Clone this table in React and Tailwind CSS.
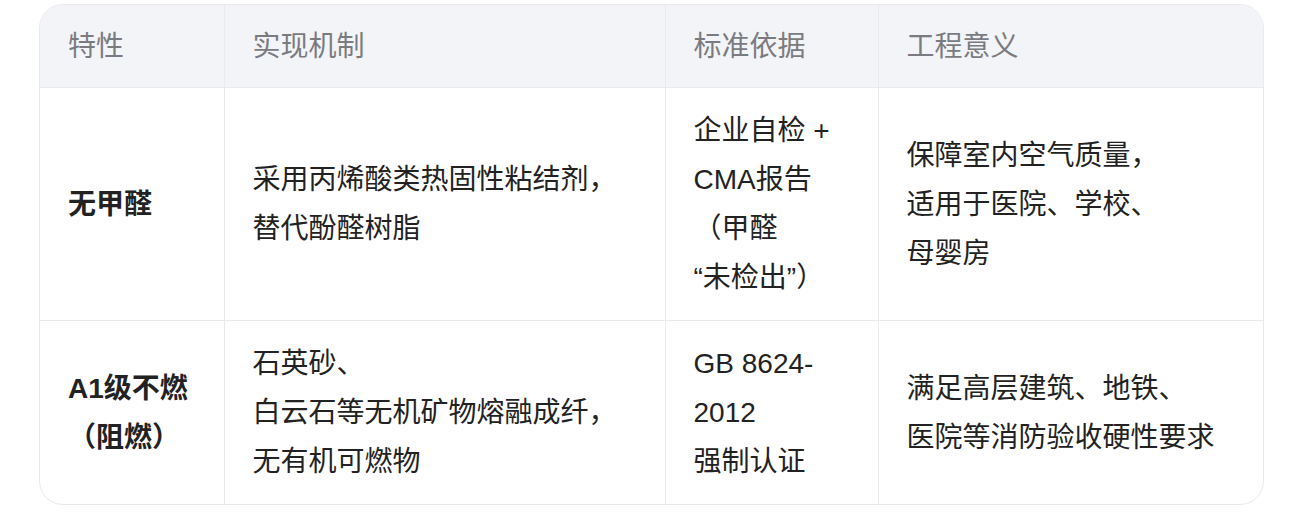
const rows = [
  {
    feature: ["无甲醛"],
    mechanism: ["采用丙烯酸类热固性粘结剂，", "替代酚醛树脂"],
    standard: ["企业自检 +", "CMA报告", "（甲醛", "“未检出”）"],
    meaning: ["保障室内空气质量，", "适用于医院、学校、", "母婴房"],
  },
  {
    feature: ["A1级不燃", "（阻燃）"],
    mechanism: ["石英砂、", "白云石等无机矿物熔融成纤，", "无有机可燃物"],
    standard: ["GB 8624-", "2012", "强制认证"],
    meaning: ["满足高层建筑、地铁、", "医院等消防验收硬性要求"],
  },
];

function Lines({ items }) {
  return items.map((line, i) => (
    <span key={i} className="block whitespace-nowrap">
      {line}
    </span>
  ));
}

export default function App() {
  const cell = "px-[28px] align-middle";
  return (
    <div
      className="w-[1293px] h-[527px] bg-white text-[28px] leading-[49px] text-[#222]"
      style={{ fontFamily: '"Liberation Sans", "Noto Sans CJK SC", sans-serif' }}
    >
      <div className="pt-[4px] pl-[39px]">
        <div className="w-[1225px] border border-[#e9e9ee] rounded-[24px] overflow-hidden">
          <table className="w-full border-collapse table-fixed">
            <colgroup>
              <col className="w-[184px]" />
              <col className="w-[441px]" />
              <col className="w-[213px]" />
              <col />
            </colgroup>
            <thead>
              <tr className="bg-[#f3f4f8] text-[#7a7b80] text-left">
                <th className={`${cell} font-normal pt-[17px] pb-[16px]`}>特性</th>
                <th className={`${cell} font-normal pt-[17px] pb-[16px] border-l border-[#e9e9ee]`}>实现机制</th>
                <th className={`${cell} font-normal pt-[17px] pb-[16px] border-l border-[#e9e9ee]`}>标准依据</th>
                <th className={`${cell} font-normal pt-[17px] pb-[16px] border-l border-[#e9e9ee]`}>工程意义</th>
              </tr>
            </thead>
            <tbody>
              {rows.map((r, i) => (
                <tr key={i} className="border-t border-[#e9e9ee]">
                  <td className={`${cell} py-[18px] font-bold`}>
                    <Lines items={r.feature} />
                  </td>
                  <td className={`${cell} py-[18px] border-l border-[#e9e9ee]`}>
                    <Lines items={r.mechanism} />
                  </td>
                  <td className={`${cell} py-[18px] border-l border-[#e9e9ee]`}>
                    <Lines items={r.standard} />
                  </td>
                  <td className={`${cell} py-[18px] border-l border-[#e9e9ee]`}>
                    <Lines items={r.meaning} />
                  </td>
                </tr>
              ))}
            </tbody>
          </table>
        </div>
        <div className="mt-[22px] w-[5px] h-[1px] bg-[#555]" />
      </div>
    </div>
  );
}
